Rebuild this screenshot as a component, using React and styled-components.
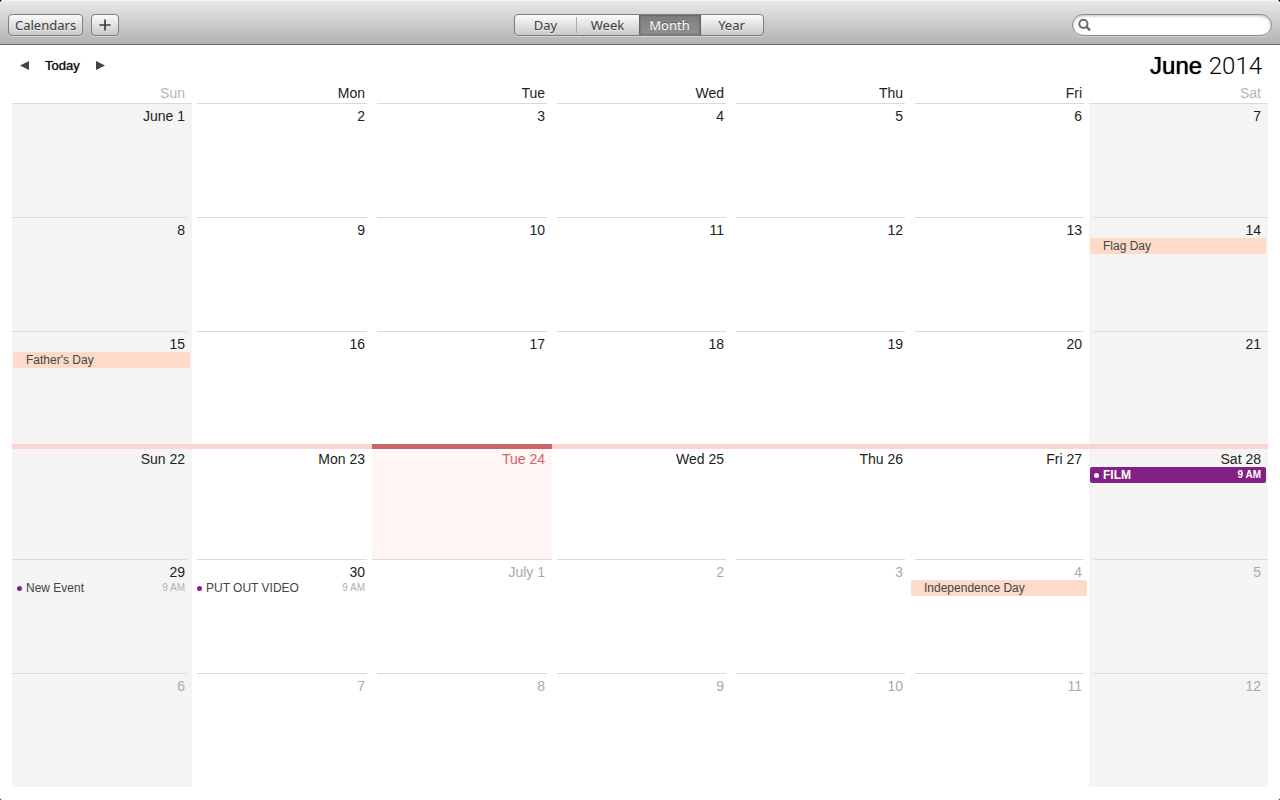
import React, { useState } from 'react'
import styled, { createGlobalStyle } from 'styled-components'

const GlobalStyle = createGlobalStyle`
  * {
    box-sizing: border-box;
  }
  body {
    margin: 0;
    background: #000;
    font-family: "Liberation Sans", Arial, sans-serif;
  }
`

const Window = styled.div`
  display: flex;
  flex-direction: column;
  min-height: 100vh;
  background: #fff;
  border-radius: 4px 4px 2px 2px;
  overflow: hidden;
`

const Toolbar = styled.header`
  display: grid;
  grid-template-columns: 1fr auto 1fr;
  align-items: center;
  height: 45px;
  padding: 5px 8px 0;
  background: linear-gradient(#e9e9e9, #b2b2b2);
  border-bottom: 1px solid #686868;
  box-shadow: inset 0 1px 0 #f6f6f6;
`

const ToolbarGroup = styled.div`
  display: flex;
  gap: 8px;
`

const ToolButton = styled.button`
  display: flex;
  align-items: center;
  justify-content: center;
  height: 22px;
  padding: 0 6px;
  min-width: 28px;
  border: 1px solid #7e7e7e;
  border-radius: 4px;
  background: linear-gradient(#fbfbfb, #c9c9c9);
  box-shadow: 0 1px 0 #d4d4d4;
  color: #3c3c3c;
  font: 13px/20px "Noto Sans", "Open Sans", sans-serif;
  text-shadow: 0 1px 0 #eee;
`

const Segments = styled.div`
  display: flex;
  height: 22px;
  margin-right: 3px;
  border: 1px solid #7e7e7e;
  border-radius: 4px;
  background: linear-gradient(#fbfbfb, #c9c9c9);
  box-shadow: 0 1px 0 #d4d4d4;
  overflow: hidden;
`

const Segment = styled.button`
  width: 62px;
  height: 20px;
  padding: 0;
  border: 0;
  background: ${({ $active }) => $active ? 'linear-gradient(#7d7d7d, #919191)' : 'none'};
  box-shadow: ${({ $active }) => $active ? 'inset 1px 0 2px #5a5a5a, inset -1px 0 2px #5a5a5a' : 'none'};
  color: ${({ $active }) => $active ? '#fff' : '#3c3c3c'};
  text-shadow: ${({ $active }) => $active ? '0 -1px 0 #555' : '0 1px 0 #eee'};
  font: 13px/20px "Noto Sans", "Open Sans", sans-serif;
  &:first-child {
    background: ${({ $active }) => $active
      ? 'linear-gradient(#7d7d7d, #919191)'
      : 'linear-gradient(#aaa, #aaa) right center / 1px 16px no-repeat'};
  }
`

const SearchBox = styled.label`
  justify-self: end;
  display: flex;
  align-items: center;
  gap: 4px;
  width: 200px;
  height: 22px;
  padding: 0 8px 0 5px;
  border: 1px solid #8a8a8a;
  border-radius: 11px;
  background: #fff;
  box-shadow: inset 0 1px 3px #bbb, 0 1px 0 #d4d4d4;
  input {
    flex: 1;
    min-width: 0;
    padding: 0;
    border: 0;
    outline: 0;
    background: none;
    font-size: 12px;
  }
`

const Content = styled.main`
  flex: 1;
  display: flex;
  flex-direction: column;
  padding: 0 12px 13px;
`

const TitleRow = styled.div`
  display: flex;
  justify-content: space-between;
  align-items: center;
  height: 41px;
  padding: 0 6px;
`

const Nav = styled.nav`
  display: flex;
  align-items: center;
  gap: 14px;
  button {
    display: flex;
    align-items: center;
    padding: 0;
    border: 0;
    background: none;
    color: #111;
    font: 13px/16px "Liberation Sans", Arial, sans-serif;
    text-shadow: 0 0 1px #444;
  }
  button svg {
    margin: 0 2px;
  }
`

const Title = styled.h1`
  margin: 0;
  color: #000;
  font-size: 24px;
  line-height: 30px;
  font-weight: 400;
  text-shadow: 0 0 1px #000;
  span {
    font-family: Roboto, sans-serif;
    font-weight: 300;
    text-shadow: none;
  }
`

const Month = styled.table`
  flex: 1;
  display: flex;
  flex-direction: column;
  thead {
    display: block;
  }
  tbody {
    flex: 1;
    display: grid;
    grid-template-rows: repeat(6, minmax(96px, 1fr));
  }
`

const WeekRow = styled.tr`
  display: grid;
  grid-template-columns: repeat(3, minmax(180px, 1fr)) repeat(4, 1fr);
`

const Weekday = styled.th`
  padding: 0 7px 2px 0;
  color: ${({ $weekend }) => $weekend ? '#b5b5b5' : '#222'};
  font-size: 14px;
  line-height: 15px;
  font-weight: 400;
  text-align: right;
`

const dayColor = ({ $today, $muted }) => $today ? '#cb6668' : $muted ? '#aaa' : '#222'

const dayBackground = ({ $today, $weekend }) => $today ? '#fff5f4' : $weekend ? '#f4f4f4' : '#fff'

// the rule above a day, or the thick band above the current week
const Day = styled.td`
  position: relative;
  padding: ${({ $current }) => $current ? '7px 0 0' : '6px 0 0'};
  background: ${dayBackground};
  color: ${dayColor};
  font-size: 14px;
  line-height: 15px;
  text-align: right;
  &::before {
    content: '';
    position: absolute;
    top: ${({ $current }) => $current ? '-1px' : '0'};
    left: ${({ $current, $flushLeft }) => $current || $flushLeft ? '0' : '5px'};
    right: ${({ $current, $flushRight }) => $current || $flushRight ? '0' : '5px'};
    height: ${({ $current }) => $current ? '5px' : '1px'};
    background: ${({ $current, $today }) => $today ? '#cb6668' : $current ? '#fdd4d5' : '#dadada'};
  }
  time {
    display: block;
    padding-right: 7px;
  }
`

const Event = styled.div`
  display: flex;
  align-items: center;
  height: 16px;
  margin: 0 2px 0 1px;
  padding: 0 5px 0 4px;
  border-radius: 2px;
  background: ${({ $kind }) => ({ holiday: '#fddaca', selected: '#832083' })[$kind] || 'none'};
  color: ${({ $kind }) => $kind === 'selected' ? '#fff' : '#444'};
  font-size: 12px;
  font-weight: ${({ $kind }) => $kind === 'selected' ? 700 : 400};
  line-height: 16px;
  small {
    margin-left: auto;
    color: ${({ $kind }) => $kind === 'selected' ? '#fff' : '#b0b0b0'};
    font-size: 10px;
  }
`

const Dot = styled.i`
  width: 5px;
  height: 5px;
  margin-right: 4px;
  border-radius: 50%;
  background: ${({ $kind }) => ({ holiday: 'transparent', selected: '#fff' })[$kind] || '#832083'};
`

const weekdays = ['Sun', 'Mon', 'Tue', 'Wed', 'Thu', 'Fri', 'Sat']
const views = ['Day', 'Week', 'Month', 'Year']

const events = {
  '2014-06-14': { title: 'Flag Day', kind: 'holiday' },
  '2014-06-15': { title: "Father's Day", kind: 'holiday' },
  '2014-06-28': { title: 'FILM', time: '9 AM', kind: 'selected' },
  '2014-06-29': { title: 'New Event', time: '9 AM' },
  '2014-06-30': { title: 'PUT OUT VIDEO', time: '9 AM' },
  '2014-07-04': { title: 'Independence Day', kind: 'holiday' },
}

const TODAY = 23
const CURRENT_WEEK = 3

const getDay = (index) => {
  const july = index >= 30
  const number = july ? index - 29 : index + 1
  const date = `2014-0${july ? 7 : 6}-${String(number).padStart(2, '0')}`
  const current = Math.floor(index / 7) === CURRENT_WEEK
  let label = number
  if (number === 1) label = `${july ? 'July' : 'June'} 1`
  if (current) label = `${weekdays[index % 7]} ${number}`
  return { index, july, date, current, label, event: events[date] }
}

const weeks = [0, 1, 2, 3, 4, 5].map(w => weekdays.map((_, d) => getDay(w * 7 + d)))

const DayCell = ({ day }) => {
  const { index, july, date, current, label, event } = day
  const column = index % 7
  const belowToday = index === TODAY + 7
  return (
    <Day
      $weekend={column === 0 || column === 6}
      $today={index === TODAY}
      $current={current}
      $muted={july}
      $flushLeft={column === 0 || index < 7 && column === 6 || belowToday}
      $flushRight={column === 6 || index === 0 || belowToday}
    >
      <time dateTime={date}>{label}</time>
      {event && (
        <Event $kind={event.kind}>
          <Dot $kind={event.kind} />
          {event.title}
          {event.time && <small>{event.time}</small>}
        </Event>
      )}
    </Day>
  )
}

const App = () => {
  const [view, setView] = useState('Month')

  return (
    <Window>
      <GlobalStyle />
      <Toolbar>
        <ToolbarGroup>
          <ToolButton>Calendars</ToolButton>
          <ToolButton aria-label="Add event">
            <svg width="12" height="12" viewBox="0 0 12 12" stroke="#3c3c3c" strokeWidth="1.7">
              <path d="M6 0.5v11M0.5 6h11" />
            </svg>
          </ToolButton>
        </ToolbarGroup>
        <Segments>
          {views.map(name => (
            <Segment
              key={name}
              $active={name === view}
              aria-pressed={name === view}
              onClick={() => setView(name)}
            >
              {name}
            </Segment>
          ))}
        </Segments>
        <SearchBox>
          <svg width="14" height="14" viewBox="0 0 14 14" fill="none" stroke="#6c6c6c" strokeWidth="2">
            <circle cx="5.4" cy="5.8" r="4.1" />
            <path d="M8.3 8.7l3.7 3.7" strokeWidth="2.4" />
          </svg>
          <input type="text" aria-label="Search" />
        </SearchBox>
      </Toolbar>
      <Content>
        <TitleRow>
          <Nav>
            <button aria-label="Previous month">
              <svg width="9" height="10" viewBox="0 0 9 10" fill="#444"><path d="M9 0v9L0 4.5z" /></svg>
            </button>
            <button>Today</button>
            <button aria-label="Next month">
              <svg width="9" height="10" viewBox="0 0 9 10" fill="#444"><path d="M0 0v9l9-4.5z" /></svg>
            </button>
          </Nav>
          <Title>June <span>2014</span></Title>
        </TitleRow>
        <Month>
          <thead>
            <WeekRow>
              {weekdays.map((name, i) => (
                <Weekday key={name} scope="col" $weekend={i === 0 || i === 6}>{name}</Weekday>
              ))}
            </WeekRow>
          </thead>
          <tbody>
            {weeks.map((week, i) => (
              <WeekRow key={i}>
                {week.map(day => <DayCell key={day.date} day={day} />)}
              </WeekRow>
            ))}
          </tbody>
        </Month>
      </Content>
    </Window>
  )
}

export default App
